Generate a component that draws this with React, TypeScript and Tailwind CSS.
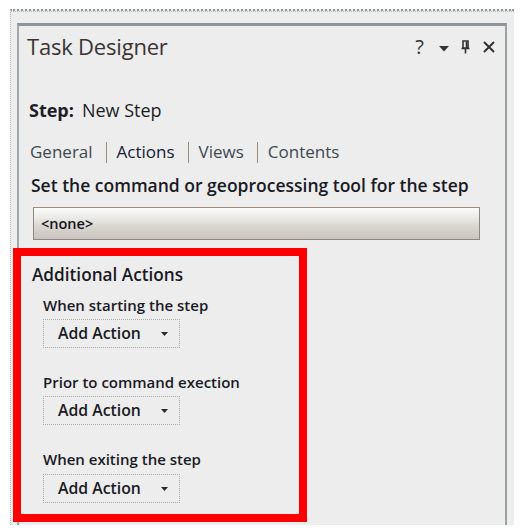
import React from "react";

const font = { fontFamily: '"Open Sans", "Noto Sans", sans-serif' };

function AddAction() {
  return (
    <div className="flex h-[29px] w-[137px] items-center border border-dotted border-[#a9a9a6] bg-[#ecedec]">
      <span className="ml-[14px] text-[15.8px] font-semibold text-[#1a1a24]">Add Action</span>
      <svg className="ml-auto mr-[11px]" width="7" height="4" viewBox="0 0 7 4">
        <path d="M0 0 H7 L3.5 4 Z" fill="#2a2a2a" />
      </svg>
    </div>
  );
}

function Sep() {
  return <span className="ml-[13px] mr-[10px] h-[21px] w-px bg-[#9c8f82]" />;
}

export default function App() {
  return (
    <div className="h-[532px] w-[521px] bg-white pt-[9px] pl-[10px]" style={font}>
      <div className="flex h-[516px] w-[504px] flex-col border-t-2 border-l border-[#8f979d] border-l-[#b8bcbf] border-dotted bg-[#ecedec]">
        <div className="h-[2px] border-t border-dotted border-[#b9bdc0]" />
        <div className="ml-[6px] mt-[10px] flex w-[490px] flex-1 flex-col border-t-[3px] border-l-2 border-r-2 border-[#8c9399] border-l-[#a3a8ac] border-r-[#9ba1a6] bg-[#ecedec]">
          {/* title row */}
          <div className="flex h-[40px] items-center pl-[8px] pr-[10px]">
            <span className="text-[22px] font-normal tracking-[-0.2px] text-[#3a3434]">Task Designer</span>
            <div className="ml-auto flex items-center pt-[2px]">
              <span className="mr-[15px] text-[20px] font-normal text-[#333]">?</span>
              <svg className="mr-[11px] mt-[4px]" width="10" height="6" viewBox="0 0 10 6">
                <path d="M0 0 H10 L5 5.5 Z" fill="#333" />
              </svg>
              <svg className="mr-[12px]" width="11" height="14" viewBox="0 0 11 14">
                <path d="M3 1 H8 V8 H3 Z M2 8 H9 M1.5 8.5 H9.5 M5.5 8.5 V13.5" fill="none" stroke="#333" strokeWidth="1.6" />
                <path d="M6.5 1.5 V8" stroke="#333" strokeWidth="1.6" />
              </svg>
              <svg width="12" height="12" viewBox="0 0 12 12">
                <path d="M1 1 L11 11 M11 1 L1 11" stroke="#333" strokeWidth="2" />
              </svg>
            </div>
          </div>

          {/* step */}
          <div className="mt-[32px] flex h-[24px] items-center pl-[10px] text-[18px] text-[#1d1d28]">
            <span className="font-bold">Step:</span>
            <span className="ml-[8px]">New Step</span>
          </div>

          {/* tabs */}
          <div className="mt-[18px] flex h-[24px] items-center pl-[11px] text-[17px]">
            <span className="text-[#3e4852]">General</span>
            <Sep />
            <span className="text-[#15203a]">Actions</span>
            <Sep />
            <span className="text-[#3e4852]">Views</span>
            <Sep />
            <span className="text-[#3e4852]">Contents</span>
          </div>

          {/* command */}
          <div className="mt-[10px] flex h-[22px] items-center pl-[12px] text-[17.5px] font-semibold text-[#1a1a26]">
            Set the command or geoprocessing tool for the step
          </div>

          <div className="ml-[14px] mt-[11px] flex h-[33px] w-[447px] items-center border border-[#8f8880] border-t-[#a38b7c] bg-[linear-gradient(to_bottom,#fbfbfb_0%,#ecebe8_30%,#d9d6d0_60%,#c9c5bd_100%)] pl-[7px]">
            <span className="text-[14.5px] font-semibold text-[#141420]">&lt;none&gt;</span>
          </div>

          {/* additional actions */}
          <div className="ml-[-6px] mt-[8px] flex h-[274px] w-[294px] flex-col border-[8px] border-[#ff0000] pl-[11px] pt-[8px]">
            <div className="flex h-[22px] items-center text-[17.2px] font-semibold text-[#1a1a26]">Additional Actions</div>
            <div className="ml-[11px] mt-[9px] flex h-[20px] items-center text-[15px] font-semibold text-[#1a1a26]">When starting the step</div>
            <div className="ml-[11px] mt-[4px]"><AddAction /></div>
            <div className="ml-[11px] mt-[24px] flex h-[20px] items-center text-[15px] font-semibold text-[#1a1a26]">Prior to command exection</div>
            <div className="ml-[11px] mt-[4px]"><AddAction /></div>
            <div className="ml-[11px] mt-[24px] flex h-[20px] items-center text-[15px] font-semibold text-[#1a1a26]">When exiting the step</div>
            <div className="ml-[11px] mt-[5px]"><AddAction /></div>
          </div>
        </div>
      </div>
    </div>
  );
}
